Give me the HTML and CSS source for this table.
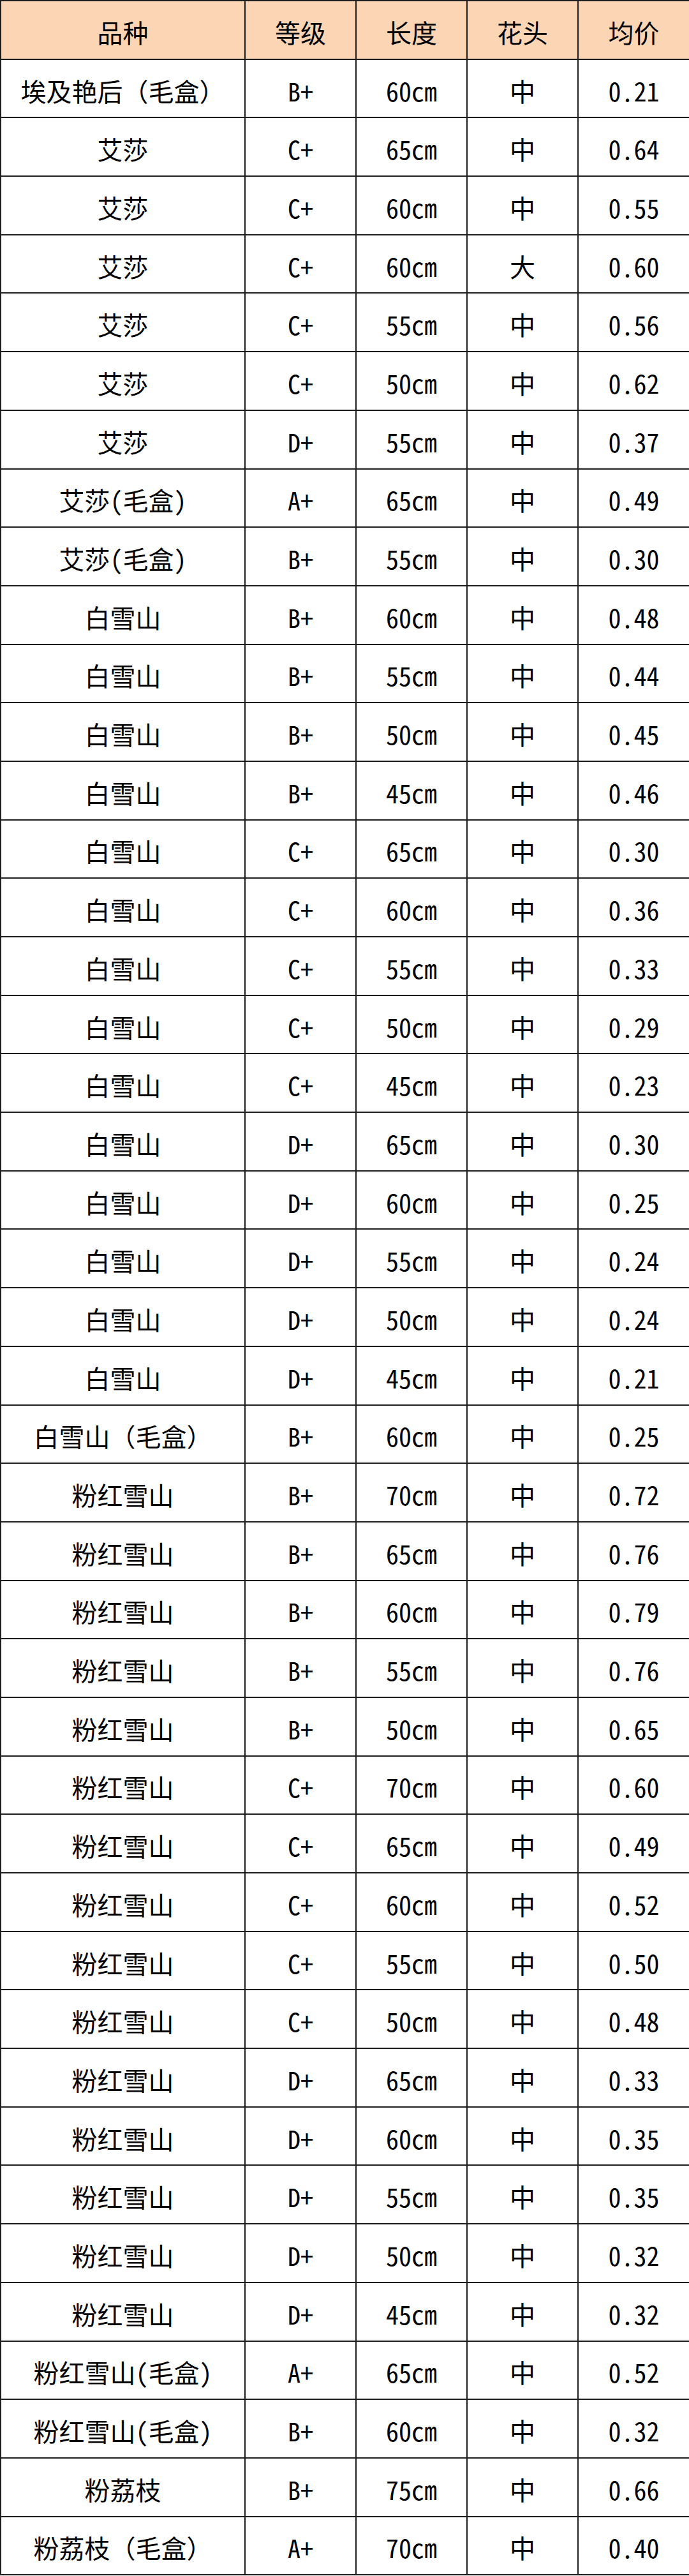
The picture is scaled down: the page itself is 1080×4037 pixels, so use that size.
FILE: index.html
```html
<!DOCTYPE html>
<html lang="zh-CN">
<head>
<meta charset="utf-8">
<title>价格表</title>
<link rel="stylesheet" href="styles.css">
</head>
<body>
<table class="price-table">
<colgroup>
<col class="col-name"><col class="col-grade"><col class="col-len"><col class="col-head"><col class="col-price">
</colgroup>
<thead>
<tr><th>品种</th><th>等级</th><th>长度</th><th>花头</th><th>均价</th></tr>
</thead>
<tbody>
<tr><td>埃及艳后（毛盒）</td><td>B+</td><td>60cm</td><td>中</td><td>0.21</td></tr>
<tr><td>艾莎</td><td>C+</td><td>65cm</td><td>中</td><td>0.64</td></tr>
<tr><td>艾莎</td><td>C+</td><td>60cm</td><td>中</td><td>0.55</td></tr>
<tr><td>艾莎</td><td>C+</td><td>60cm</td><td>大</td><td>0.60</td></tr>
<tr><td>艾莎</td><td>C+</td><td>55cm</td><td>中</td><td>0.56</td></tr>
<tr><td>艾莎</td><td>C+</td><td>50cm</td><td>中</td><td>0.62</td></tr>
<tr><td>艾莎</td><td>D+</td><td>55cm</td><td>中</td><td>0.37</td></tr>
<tr><td>艾莎(毛盒)</td><td>A+</td><td>65cm</td><td>中</td><td>0.49</td></tr>
<tr><td>艾莎(毛盒)</td><td>B+</td><td>55cm</td><td>中</td><td>0.30</td></tr>
<tr><td>白雪山</td><td>B+</td><td>60cm</td><td>中</td><td>0.48</td></tr>
<tr><td>白雪山</td><td>B+</td><td>55cm</td><td>中</td><td>0.44</td></tr>
<tr><td>白雪山</td><td>B+</td><td>50cm</td><td>中</td><td>0.45</td></tr>
<tr><td>白雪山</td><td>B+</td><td>45cm</td><td>中</td><td>0.46</td></tr>
<tr><td>白雪山</td><td>C+</td><td>65cm</td><td>中</td><td>0.30</td></tr>
<tr><td>白雪山</td><td>C+</td><td>60cm</td><td>中</td><td>0.36</td></tr>
<tr><td>白雪山</td><td>C+</td><td>55cm</td><td>中</td><td>0.33</td></tr>
<tr><td>白雪山</td><td>C+</td><td>50cm</td><td>中</td><td>0.29</td></tr>
<tr><td>白雪山</td><td>C+</td><td>45cm</td><td>中</td><td>0.23</td></tr>
<tr><td>白雪山</td><td>D+</td><td>65cm</td><td>中</td><td>0.30</td></tr>
<tr><td>白雪山</td><td>D+</td><td>60cm</td><td>中</td><td>0.25</td></tr>
<tr><td>白雪山</td><td>D+</td><td>55cm</td><td>中</td><td>0.24</td></tr>
<tr><td>白雪山</td><td>D+</td><td>50cm</td><td>中</td><td>0.24</td></tr>
<tr><td>白雪山</td><td>D+</td><td>45cm</td><td>中</td><td>0.21</td></tr>
<tr><td>白雪山（毛盒）</td><td>B+</td><td>60cm</td><td>中</td><td>0.25</td></tr>
<tr><td>粉红雪山</td><td>B+</td><td>70cm</td><td>中</td><td>0.72</td></tr>
<tr><td>粉红雪山</td><td>B+</td><td>65cm</td><td>中</td><td>0.76</td></tr>
<tr><td>粉红雪山</td><td>B+</td><td>60cm</td><td>中</td><td>0.79</td></tr>
<tr><td>粉红雪山</td><td>B+</td><td>55cm</td><td>中</td><td>0.76</td></tr>
<tr><td>粉红雪山</td><td>B+</td><td>50cm</td><td>中</td><td>0.65</td></tr>
<tr><td>粉红雪山</td><td>C+</td><td>70cm</td><td>中</td><td>0.60</td></tr>
<tr><td>粉红雪山</td><td>C+</td><td>65cm</td><td>中</td><td>0.49</td></tr>
<tr><td>粉红雪山</td><td>C+</td><td>60cm</td><td>中</td><td>0.52</td></tr>
<tr><td>粉红雪山</td><td>C+</td><td>55cm</td><td>中</td><td>0.50</td></tr>
<tr><td>粉红雪山</td><td>C+</td><td>50cm</td><td>中</td><td>0.48</td></tr>
<tr><td>粉红雪山</td><td>D+</td><td>65cm</td><td>中</td><td>0.33</td></tr>
<tr><td>粉红雪山</td><td>D+</td><td>60cm</td><td>中</td><td>0.35</td></tr>
<tr><td>粉红雪山</td><td>D+</td><td>55cm</td><td>中</td><td>0.35</td></tr>
<tr><td>粉红雪山</td><td>D+</td><td>50cm</td><td>中</td><td>0.32</td></tr>
<tr><td>粉红雪山</td><td>D+</td><td>45cm</td><td>中</td><td>0.32</td></tr>
<tr><td>粉红雪山(毛盒)</td><td>A+</td><td>65cm</td><td>中</td><td>0.52</td></tr>
<tr><td>粉红雪山(毛盒)</td><td>B+</td><td>60cm</td><td>中</td><td>0.32</td></tr>
<tr><td>粉荔枝</td><td>B+</td><td>75cm</td><td>中</td><td>0.66</td></tr>
<tr><td>粉荔枝（毛盒）</td><td>A+</td><td>70cm</td><td>中</td><td>0.40</td></tr>
</tbody>
</table>
</body>
</html>
```
FILE: styles.css
```css
html, body {
  margin: 0;
  padding: 0;
  background: #ffffff;
}

.price-table {
  width: 1080px;
  table-layout: fixed;
  border-collapse: collapse;
  font-family: "Noto Sans Mono CJK SC", "Noto Sans CJK SC", "DejaVu Sans Mono", monospace;
  font-size: 40px;
  color: #000000;
}

.col-name { width: 383px; }
.col-grade { width: 174px; }
.col-len { width: 174px; }
.col-head { width: 174px; }
.col-price { width: 175px; }

.price-table th,
.price-table td {
  height: 91.7px;
  padding: 6px 0 0 0;
  box-sizing: border-box;
  border: 2px solid #1c1c1c;
  text-align: center;
  vertical-align: middle;
  font-weight: normal;
  white-space: nowrap;
  line-height: 1;
}

.price-table thead th {
  background: #fcd5b4;
}
```
